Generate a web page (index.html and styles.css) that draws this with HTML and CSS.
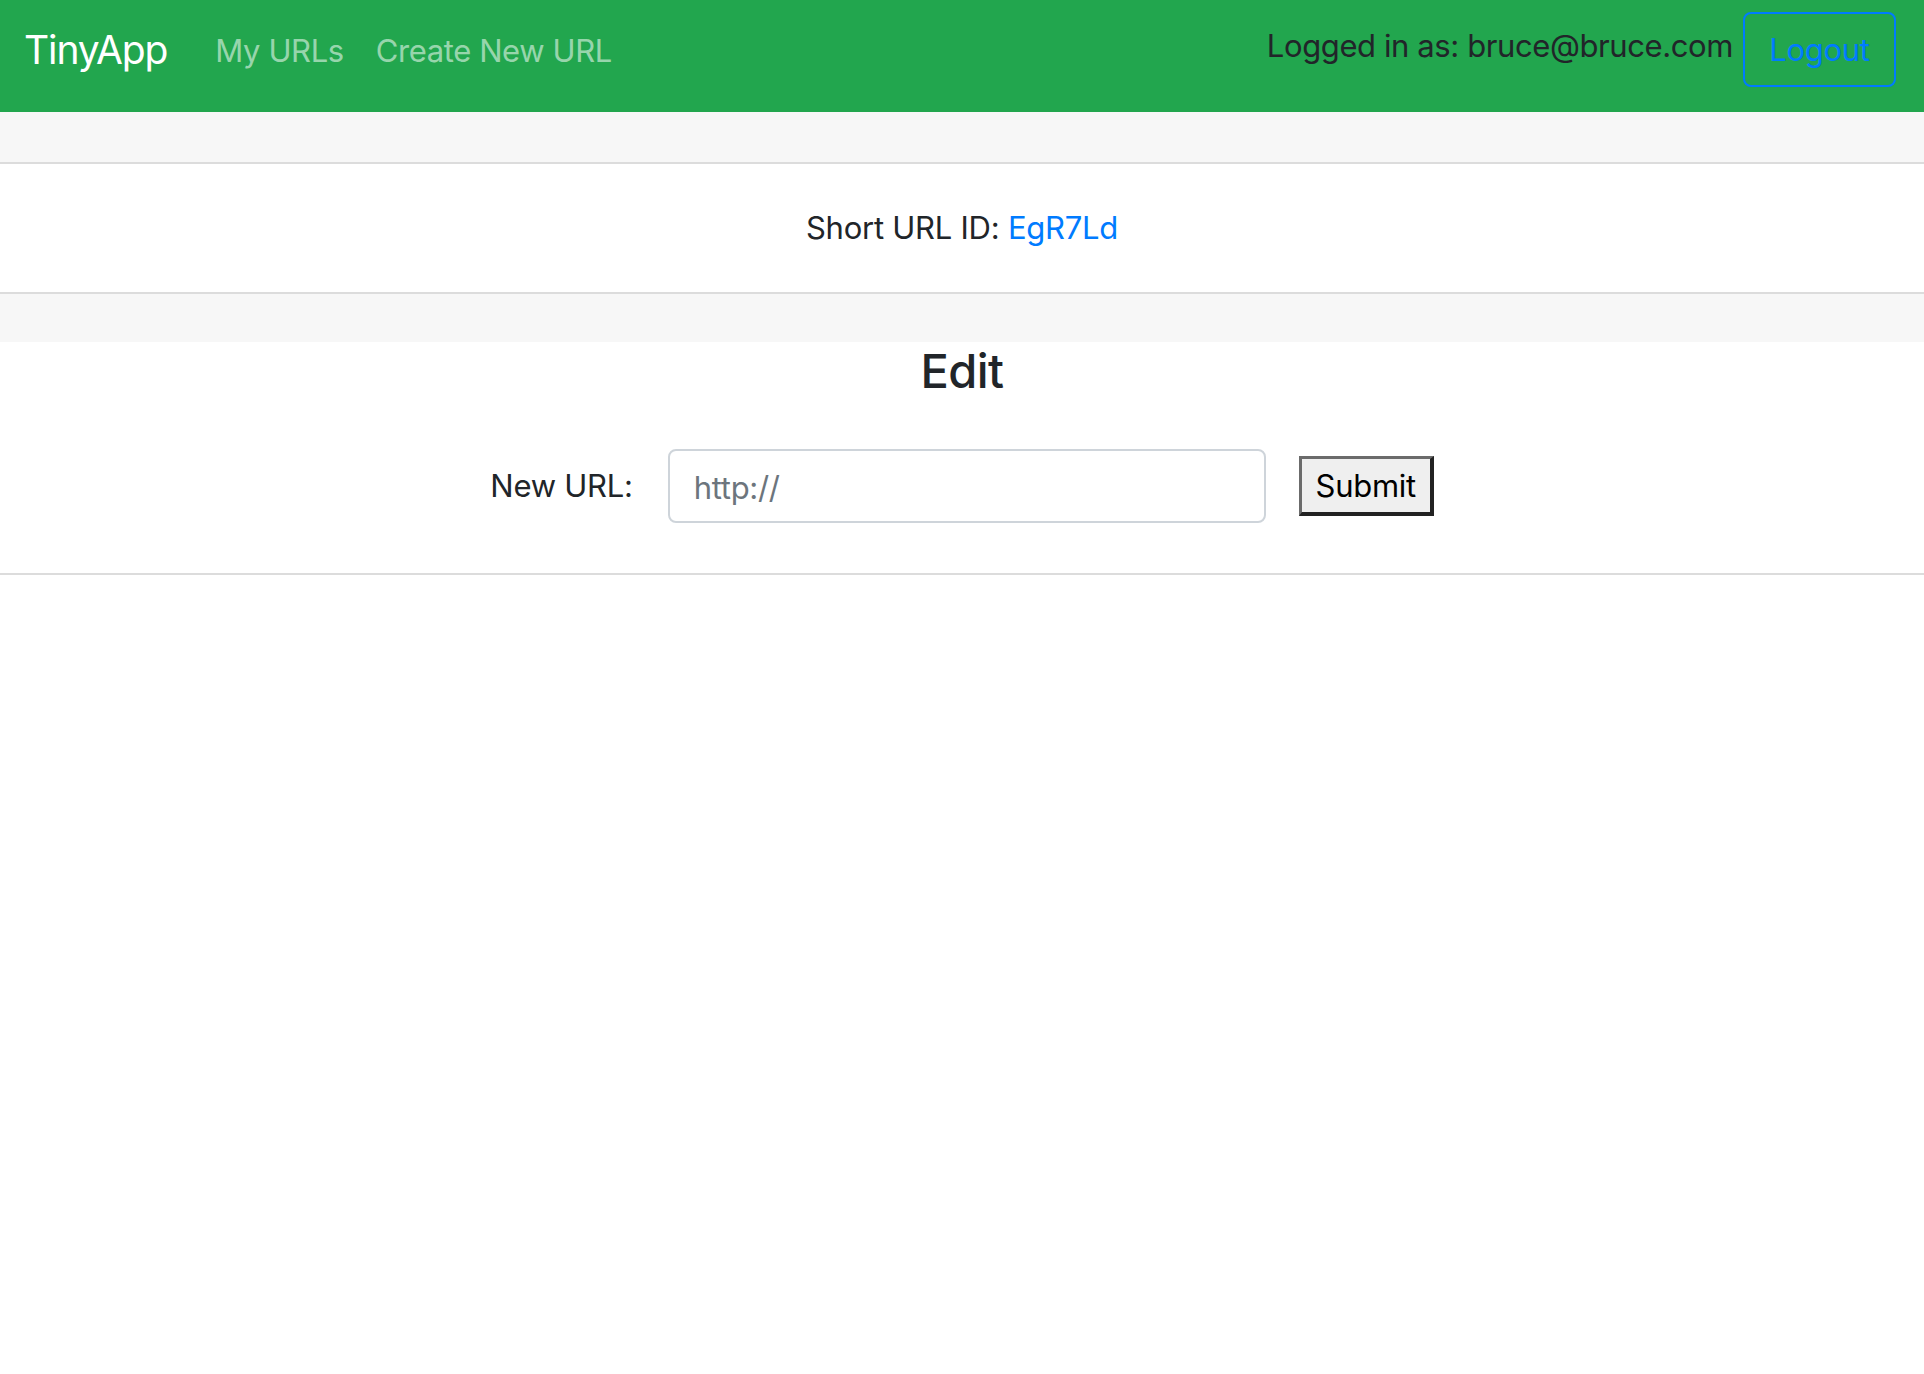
FILE: index.html
```html
<!DOCTYPE html>
<html lang="en">
<head>
<meta charset="utf-8">
<title>TinyApp</title>
<link rel="stylesheet" href="styles.css">
</head>
<body>
<nav class="navbar">
  <a class="brand" href="#">TinyApp</a>
  <div class="nav-links">
    <a class="nav-link" href="#">My URLs</a>
    <a class="nav-link" href="#">Create New URL</a>
  </div>
  <div class="nav-right">
    <span class="logged">Logged in as: bruce@bruce.com</span>
    <button class="btn-logout" type="button">Logout</button>
  </div>
</nav>
<main>
  <section class="card">
    <div class="card-header"></div>
    <div class="card-body">
      <p class="card-title">Short URL ID: <a href="#" class="short-id">EgR7Ld</a></p>
    </div>
    <div class="card-footer"></div>
  </section>
  <section class="edit">
    <h4 class="edit-title">Edit</h4>
    <form class="edit-form">
      <label class="edit-label" for="newurl">New URL:</label>
      <input class="form-control" id="newurl" type="text" placeholder="http://">
      <button class="btn-submit" type="submit">Submit</button>
    </form>
  </section>
</main>
</body>
</html>
```

FILE: styles.css
```css
* { box-sizing: border-box; }
html, body { margin: 0; padding: 0; }
body {
  font-family: Inter, "Noto Sans", "Liberation Sans", sans-serif;
  color: #212529;
  background: #fff;
  font-size: 31px;
  letter-spacing: -0.25px;
  line-height: 48px;
}
a { text-decoration: none; }

.navbar {
  display: flex;
  align-items: flex-start;
  height: 112px;
  background: #22a64e;
  padding: 0 28px 0 24px;
}
.brand {
  color: #fff;
  font-size: 39px;
  letter-spacing: -1.1px;
  line-height: 60px;
  margin-top: 20px;
  margin-right: 32px;
}
.nav-links {
  display: flex;
  margin-top: 27px;
}
.nav-link {
  color: rgba(255,255,255,.55);
  letter-spacing: -0.4px;
  line-height: 48px;
  padding: 0 16px;
}
.nav-right {
  margin-left: auto;
  display: flex;
  align-items: flex-start;
}
.logged {
  margin-top: 22px;
  margin-right: 10px;
  letter-spacing: -0.4px;
}
.btn-logout {
  margin-top: 12px;
  font-family: inherit;
  font-size: 31px;
  letter-spacing: -0.3px;
  line-height: 48px;
  color: #007bff;
  background: transparent;
  border: 2px solid #007bff;
  border-radius: 8px;
  padding: 12px 0 11px;
  width: 153px;
}

.card-header {
  height: 52px;
  background: #f7f7f7;
  border-bottom: 2px solid #dcdcdc;
}
.card-body {
  padding: 40px 0;
  text-align: center;
}
.card-title { margin: 0; }
.short-id { color: #007bff; }
.card-footer {
  height: 50px;
  background: #f7f7f7;
  border-top: 2px solid #dcdcdc;
}

.edit {
  text-align: center;
  border-bottom: 2px solid #dcdcdc;
  padding-bottom: 50px;
}
.edit-title {
  margin: 0 0 16px;
  font-size: 47px;
  letter-spacing: -0.6px;
  line-height: 58px;
  font-weight: 500;
}
.edit-form {
  display: flex;
  justify-content: center;
  align-items: center;
  padding-top: 33px;
}
.edit-label {
  margin-right: 35px;
}
.form-control {
  width: 598px;
  height: 74px;
  border: 2px solid #ced4da;
  border-radius: 8px;
  padding: 2px 24px 0;
  font-family: inherit;
  font-size: 31px;
  letter-spacing: -0.3px;
  color: #495057;
  margin-right: 33px;
}
.form-control::placeholder { color: #6c757d; }
.btn-submit {
  height: 60px;
  width: 135px;
  padding: 0;
  font-family: inherit;
  font-size: 31px;
  letter-spacing: -0.3px;
  color: #000;
  background: #efefef;
  border-style: solid;
  border-width: 3px 4px 4px 3px;
  border-color: #6b6b6b #222 #222 #6b6b6b;
}
```
